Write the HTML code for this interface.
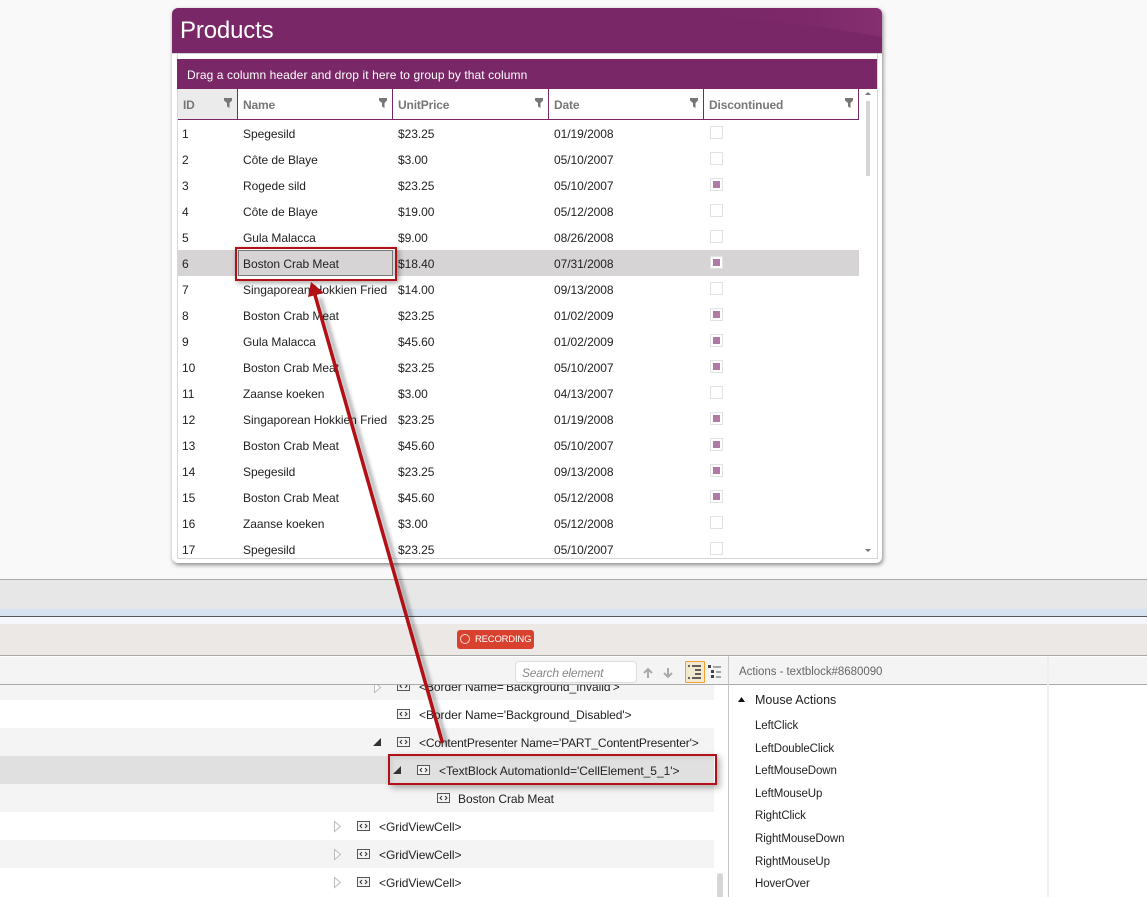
<!DOCTYPE html>
<html><head><meta charset="utf-8"><style>
html,body{margin:0;padding:0}
body{width:1147px;height:897px;overflow:hidden;position:relative;background:#f9f9f9;font-family:"Liberation Sans",sans-serif;font-size:12px;color:#222}
div,span,svg{position:absolute}
svg{overflow:visible}
.r{left:0;width:860px;height:26px;line-height:28px}
.r span{white-space:nowrap;letter-spacing:-.05px}
.a{left:182px}.b{left:243px;max-width:146px;overflow:hidden}.c{left:398px}.d{left:554px}
.x{left:710px;top:6px;width:11px;height:11px;border:1px solid #e2e2e2;background:#fff}
.x.on::after{content:"";position:absolute;left:2px;top:2px;width:7px;height:7px;background:#b07aa3}
.h{top:90px;height:30px;line-height:31px;font-weight:bold;color:#777;white-space:nowrap;letter-spacing:-.15px}
.v{top:89px;width:1px;height:31px;background:#7a2767}
.t{white-space:nowrap;height:16px;line-height:16px;color:#222;letter-spacing:-.05px}
.s{left:0;width:714px;height:28px}
.l{left:755px;font-size:11.5px;height:16px;line-height:16px;white-space:nowrap;color:#222}
</style></head><body>

<!-- Window -->
<div style="left:172px;top:8px;width:710px;height:555px;background:#fff;border-radius:6px;box-shadow:1px 2px 4px rgba(60,60,60,.6)"></div>
<div style="left:172px;top:8px;width:710px;height:45px;background:#7a2767;border-radius:6px 6px 0 0;overflow:hidden">
<svg width="710" height="45" style="left:0;top:0"><defs><linearGradient id="g" x1="0" x2="1"><stop offset="0" stop-color="#7a2767"/><stop offset=".6" stop-color="#7e2a6b"/><stop offset="1" stop-color="#8f3578"/></linearGradient></defs><path d="M520 8C590 11 650 18 710 29V0H520Z" fill="url(#g)" opacity=".55"/></svg>
</div>
<div style="left:172px;top:53px;width:710px;height:1px;background:#cfd3d6"></div>
<div style="left:180px;top:16px;font-size:24px;line-height:30px;color:#fff;white-space:nowrap;letter-spacing:-.15px">Products</div>
<div style="left:177px;top:54px;width:1px;height:505px;background:#d8d8d8"></div>
<div style="left:877px;top:54px;width:1px;height:505px;background:#d8d8d8"></div>
<div style="left:177px;top:558px;width:701px;height:1px;background:#d4d4d4"></div>
<div style="left:177px;top:59px;width:700px;height:30px;background:#7a2767"></div>
<div style="left:187px;top:67px;font-size:12px;line-height:16px;color:#fff;white-space:nowrap;letter-spacing:.09px">Drag a column header and drop it here to group by that column</div>

<!-- Header -->
<div style="left:178px;top:89px;width:59px;height:30px;background:#ebebeb"></div>
<div style="left:178px;top:119px;width:681px;height:1px;background:#7a2767"></div>
<div class="v" style="left:237px"></div><div class="v" style="left:392px"></div><div class="v" style="left:548px"></div><div class="v" style="left:703px"></div><div class="v" style="left:858px"></div>
<span class="h" style="left:183px">ID</span><span class="h" style="left:243px">Name</span><span class="h" style="left:398px">UnitPrice</span><span class="h" style="left:554px">Date</span><span class="h" style="left:709px">Discontinued</span>
<svg width="9" height="11" style="left:224px;top:98px"><path d="M0 0H8V2.500L5.500 5V10L3 8.500V5L0 2.500Z" fill="#777"/></svg>
<svg width="9" height="11" style="left:379px;top:98px"><path d="M0 0H8V2.500L5.500 5V10L3 8.500V5L0 2.500Z" fill="#777"/></svg>
<svg width="9" height="11" style="left:535px;top:98px"><path d="M0 0H8V2.500L5.500 5V10L3 8.500V5L0 2.500Z" fill="#777"/></svg>
<svg width="9" height="11" style="left:690px;top:98px"><path d="M0 0H8V2.500L5.500 5V10L3 8.500V5L0 2.500Z" fill="#777"/></svg>
<svg width="9" height="11" style="left:845px;top:98px"><path d="M0 0H8V2.500L5.500 5V10L3 8.500V5L0 2.500Z" fill="#777"/></svg>

<!-- Scrollbar -->
<div style="left:866px;top:101px;width:4px;height:75px;background:#d6d4d5"></div>
<svg width="8" height="5" style="left:864px;top:92px"><path d="M4 0L7 3H1Z" fill="#777"/></svg>
<svg width="8" height="5" style="left:864px;top:549px"><path d="M1 0H7L4 3Z" fill="#777"/></svg>

<!-- Rows -->
<div class="r" style="top:120px"><span class="a">1</span><span class="b">Spegesild</span><span class="c">$23.25</span><span class="d">01/19/2008</span><span class="x"></span></div>
<div class="r" style="top:146px"><span class="a">2</span><span class="b">Côte de Blaye</span><span class="c">$3.00</span><span class="d">05/10/2007</span><span class="x"></span></div>
<div class="r" style="top:172px"><span class="a">3</span><span class="b">Rogede sild</span><span class="c">$23.25</span><span class="d">05/10/2007</span><span class="x on"></span></div>
<div class="r" style="top:198px"><span class="a">4</span><span class="b">Côte de Blaye</span><span class="c">$19.00</span><span class="d">05/12/2008</span><span class="x"></span></div>
<div class="r" style="top:224px"><span class="a">5</span><span class="b">Gula Malacca</span><span class="c">$9.00</span><span class="d">08/26/2008</span><span class="x"></span></div>
<div style="left:178px;top:250px;width:681px;height:26px;background:#d6d4d5"></div>
<div style="left:238px;top:250px;width:153px;height:24px;border:1px solid #777"></div>
<div class="r" style="top:250px"><span class="a">6</span><span class="b">Boston Crab Meat</span><span class="c">$18.40</span><span class="d">07/31/2008</span><span class="x on"></span></div>
<div class="r" style="top:276px"><span class="a">7</span><span class="b">Singaporean Hokkien Fried</span><span class="c">$14.00</span><span class="d">09/13/2008</span><span class="x"></span></div>
<div class="r" style="top:302px"><span class="a">8</span><span class="b">Boston Crab Meat</span><span class="c">$23.25</span><span class="d">01/02/2009</span><span class="x on"></span></div>
<div class="r" style="top:328px"><span class="a">9</span><span class="b">Gula Malacca</span><span class="c">$45.60</span><span class="d">01/02/2009</span><span class="x on"></span></div>
<div class="r" style="top:354px"><span class="a">10</span><span class="b">Boston Crab Meat</span><span class="c">$23.25</span><span class="d">05/10/2007</span><span class="x on"></span></div>
<div class="r" style="top:380px"><span class="a">11</span><span class="b">Zaanse koeken</span><span class="c">$3.00</span><span class="d">04/13/2007</span><span class="x"></span></div>
<div class="r" style="top:406px"><span class="a">12</span><span class="b">Singaporean Hokkien Fried</span><span class="c">$23.25</span><span class="d">01/19/2008</span><span class="x on"></span></div>
<div class="r" style="top:432px"><span class="a">13</span><span class="b">Boston Crab Meat</span><span class="c">$45.60</span><span class="d">05/10/2007</span><span class="x on"></span></div>
<div class="r" style="top:458px"><span class="a">14</span><span class="b">Spegesild</span><span class="c">$23.25</span><span class="d">09/13/2008</span><span class="x on"></span></div>
<div class="r" style="top:484px"><span class="a">15</span><span class="b">Boston Crab Meat</span><span class="c">$45.60</span><span class="d">05/12/2008</span><span class="x on"></span></div>
<div class="r" style="top:510px"><span class="a">16</span><span class="b">Zaanse koeken</span><span class="c">$3.00</span><span class="d">05/12/2008</span><span class="x"></span></div>
<div class="r" style="top:536px"><span class="a">17</span><span class="b">Spegesild</span><span class="c">$23.25</span><span class="d">05/10/2007</span><span class="x"></span></div>

<!-- Bottom bands -->
<div style="left:0;top:579px;width:1147px;height:1px;background:#aaa"></div>
<div style="left:0;top:580px;width:1147px;height:29px;background:#e7e7e7"></div>
<div style="left:0;top:609px;width:1147px;height:7px;background:#d6e2ef"></div>
<div style="left:0;top:616px;width:1147px;height:1px;background:#555"></div>
<div style="left:0;top:617px;width:1147px;height:7px;background:#f5f7fc"></div>
<div style="left:0;top:624px;width:1147px;height:31px;background:#ece8e5"></div>
<div style="left:0;top:655px;width:1147px;height:1px;background:#a8a8a8"></div>
<div style="left:0;top:656px;width:1147px;height:241px;background:#fff"></div>
<div style="left:0;top:657px;width:1147px;height:27px;background:#f4f4f4"></div>

<!-- Recording -->
<div style="left:457px;top:630px;width:77px;height:19px;background:#d9412f;border-radius:3px"></div>
<div style="left:460px;top:634px;width:8px;height:8px;border:1px solid #f6d5cf;border-radius:50%"></div>
<div style="left:475px;top:632px;font-size:9.500px;line-height:16px;color:#fff;white-space:nowrap;letter-spacing:-.2px">RECORDING</div>

<!-- Tree rows -->
<div class="s" style="top:685px;height:15px;background:#f4f4f4"></div>
<div class="s" style="top:728px;background:#f4f4f4"></div>
<div class="s" style="top:756px;background:#e0e0e0"></div>
<div class="s" style="top:784px;background:#f4f4f4"></div>
<div class="s" style="top:840px;background:#f4f4f4"></div>

<svg width="0" height="0" style="left:0;top:0"><defs>
<g id="i"><rect x=".5" y=".5" width="12" height="9" fill="#f4f4f4" stroke="#555"/><path d="M5 3L3 5L5 7M8 3L10 5L8 7" fill="none" stroke="#333"/></g>
<g id="o"><path d="M.5 .5L6.500 5.500L.5 10.500Z" fill="#fff" stroke="#bbb"/></g>
<g id="f"><path d="M8 0V8H0Z" fill="#333"/></g>
</defs></svg>

<svg width="13" height="10" style="left:397px;top:681px"><use href="#i"/></svg>
<svg width="8" height="11" style="left:374px;top:682px"><use href="#o"/></svg>
<div class="t" style="left:419px;top:679px">&lt;Border Name='Background_Invalid'&gt;</div>
<div style="left:0;top:657px;width:726px;height:27px;background:#f4f4f4"></div>
<div style="left:0;top:684px;width:1147px;height:1px;background:#aaa"></div>

<svg width="13" height="10" style="left:397px;top:709px"><use href="#i"/></svg>
<div class="t" style="left:419px;top:707px">&lt;Border Name='Background_Disabled'&gt;</div>
<svg width="9" height="9" style="left:373px;top:738px"><use href="#f"/></svg>
<svg width="13" height="10" style="left:397px;top:737px"><use href="#i"/></svg>
<div class="t" style="left:419px;top:735px;letter-spacing:-.15px">&lt;ContentPresenter Name='PART_ContentPresenter'&gt;</div>
<svg width="9" height="9" style="left:393px;top:766px"><use href="#f"/></svg>
<svg width="13" height="10" style="left:417px;top:765px"><use href="#i"/></svg>
<div class="t" style="left:439px;top:763px;letter-spacing:-.03px">&lt;TextBlock AutomationId='CellElement_5_1'&gt;</div>
<svg width="13" height="10" style="left:437px;top:793px"><use href="#i"/></svg>
<div class="t" style="left:458px;top:791px">Boston Crab Meat</div>
<svg width="8" height="11" style="left:334px;top:821px"><use href="#o"/></svg>
<svg width="13" height="10" style="left:357px;top:821px"><use href="#i"/></svg>
<div class="t" style="left:379px;top:819px">&lt;GridViewCell&gt;</div>
<svg width="8" height="11" style="left:334px;top:849px"><use href="#o"/></svg>
<svg width="13" height="10" style="left:357px;top:849px"><use href="#i"/></svg>
<div class="t" style="left:379px;top:847px">&lt;GridViewCell&gt;</div>
<svg width="8" height="11" style="left:334px;top:877px"><use href="#o"/></svg>
<svg width="13" height="10" style="left:357px;top:877px"><use href="#i"/></svg>
<div class="t" style="left:379px;top:875px">&lt;GridViewCell&gt;</div>
<div style="left:717px;top:873px;width:6px;height:24px;background:#d6d6d6;border-radius:3px 3px 0 0"></div>

<!-- Toolbar -->
<div style="left:515px;top:661px;width:120px;height:20px;background:#fff;border:1px solid #ddd;border-radius:4px"></div>
<div style="left:522px;top:665px;font-size:12px;font-style:italic;line-height:16px;color:#888;white-space:nowrap;letter-spacing:-.2px">Search element</div>
<svg width="10" height="12" style="left:643px;top:667px"><path d="M5 11V2M1 6L5 2L9 6" fill="none" stroke="#aaa" stroke-width="2"/></svg>
<svg width="10" height="12" style="left:663px;top:667px"><path d="M5 1V10M1 6L5 10L9 6" fill="none" stroke="#aaa" stroke-width="2"/></svg>
<div style="left:685px;top:661px;width:18px;height:20px;background:#f2e8cf;border:1px solid #f0a030;border-radius:1px"></div>
<svg width="14" height="14" style="left:688px;top:665px"><path d="M0 1H2M4 1H13M7 5H13M7 9H13M0 13H2M4 13H13" stroke="#333" stroke-width="1.500" fill="none"/></svg>
<svg width="14" height="14" style="left:708px;top:665px"><path d="M0 0h3v3h-3zM3 5h3v3h-3zM3 10h3v3h-3z" fill="#444"/><path d="M5 2H13M8 7H13M8 12H13" stroke="#555"/></svg>

<!-- Actions panel -->
<div style="left:728px;top:656px;width:1px;height:241px;background:#c4c4c4"></div>
<div style="left:1047px;top:656px;width:2px;height:241px;background:#efefef"></div>
<div style="left:739px;top:664px;font-size:11.500px;line-height:16px;color:#666;white-space:nowrap;letter-spacing:-.04px">Actions - textblock#8680090</div>
<svg width="8" height="6" style="left:738px;top:697px"><path d="M3.500 0L7 5H0Z" fill="#111"/></svg>
<div class="l" style="top:692px;font-size:12.500px">Mouse Actions</div>
<div class="l" style="top:718px;letter-spacing:-.1px">LeftClick</div>
<div class="l" style="top:741px;letter-spacing:-.1px">LeftDoubleClick</div>
<div class="l" style="top:763px;letter-spacing:-.1px">LeftMouseDown</div>
<div class="l" style="top:786px;letter-spacing:-.1px">LeftMouseUp</div>
<div class="l" style="top:808px;letter-spacing:-.1px">RightClick</div>
<div class="l" style="top:831px;letter-spacing:-.1px">RightMouseDown</div>
<div class="l" style="top:854px;letter-spacing:-.1px">RightMouseUp</div>
<div class="l" style="top:876px;letter-spacing:-.1px">HoverOver</div>

<!-- Callouts -->
<div style="left:235px;top:247px;width:158px;height:30px;border:2px solid #b01016;box-shadow:2px 2px 5px rgba(0,0,0,.35)"></div>
<div style="left:388px;top:754px;width:325px;height:27px;border:2px solid #b01016;box-shadow:3px 3px 6px rgba(0,0,0,.3),inset 2px 2px 5px rgba(0,0,0,.08)"></div>
<svg width="1147" height="897" style="left:0;top:0">
<defs><filter id="b" x="-20%" y="-5%" width="140%" height="110%"><feGaussianBlur stdDeviation="1.800"/></filter></defs>
<path d="M447 745L320 298" stroke="#000" stroke-opacity=".3" stroke-width="4" fill="none" filter="url(#b)"/>
<path d="M442.500 743L315 295" stroke="#b01016" stroke-width="3.500" fill="none"/>
<path d="M311 282L324 293L308 297Z" fill="#b01016"/>
</svg>
</body></html>
